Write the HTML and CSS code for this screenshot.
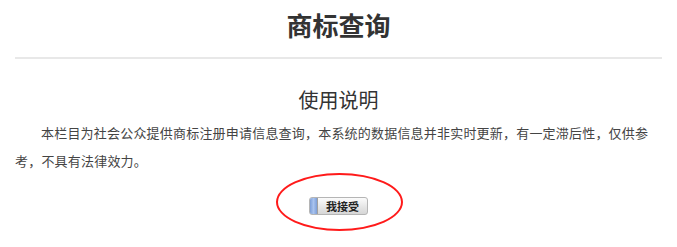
FILE: index.html
```html
<!DOCTYPE html>
<html lang="zh-CN">
<head>
<meta charset="utf-8">
<title>商标查询</title>
<link rel="stylesheet" href="styles.css">
</head>
<body>
<div class="page">
  <h1 class="title">商标查询</h1>
  <div class="rule"></div>
  <h2 class="subtitle">使用说明</h2>
  <p class="notice">本栏目为社会公众提供商标注册申请信息查询，本系统的数据信息并非实时更新，有一定滞后性，仅供参考，不具有法律效力。</p>
  <div class="actions">
    <button class="accept" type="button"><span class="accept-cap"></span><span class="accept-label">我接受</span></button>
    <span class="mark"></span>
  </div>
</div>
</body>
</html>
```

FILE: styles.css
```css
html, body {
  margin: 0;
  padding: 0;
  background: #ffffff;
}
.page {
  width: 677px;
  min-height: 247px;
  font-family: "Noto Sans CJK SC", "Liberation Sans", sans-serif;
  color: #333333;
}
.title {
  margin: 0;
  padding-top: 5px;
  height: 40px;
  line-height: 40px;
  font-size: 26px;
  font-weight: bold;
  text-align: center;
  color: #333333;
}
.rule {
  margin: 12px 15px 0 15px;
  height: 2px;
  background: #e8e8e8;
}
.subtitle {
  margin: 26px 0 0 0;
  height: 30px;
  line-height: 30px;
  font-size: 20px;
  font-weight: normal;
  text-align: center;
  color: #333333;
}
.notice {
  margin: 4px 0 0 15px;
  width: 642px;
  font-size: 13px;
  letter-spacing: 0.2px;
  line-height: 28px;
  text-indent: 26px;
  color: #444444;
}
.actions {
  position: relative;
  display: flex;
  justify-content: center;
  margin-top: 22px;
  padding-bottom: 40px;
}
.accept {
  display: flex;
  align-items: stretch;
  width: 59px;
  height: 18px;
  padding: 0;
  border: 1px solid #b5b5b5;
  border-radius: 3px;
  background: linear-gradient(#fbfbfb, #e4e4e4 60%, #d6d6d6);
  overflow: hidden;
  font-family: "Noto Sans CJK SC", sans-serif;
  cursor: pointer;
}
.accept-cap {
  width: 7px;
  background: linear-gradient(90deg, #7d9fd8, #a9c3ee 50%, #7d9fd8);
  border-right: 1px solid #a0a0a0;
}
.accept-label {
  flex: 1;
  font-size: 11px;
  line-height: 16px;
  font-weight: bold;
  color: #222222;
  text-align: center;
}
.mark {
  position: absolute;
  left: 276px;
  top: -24px;
  width: 123px;
  height: 54px;
  border: 2.5px solid #ff1a1a;
  border-radius: 50%;
  pointer-events: none;
}
```
